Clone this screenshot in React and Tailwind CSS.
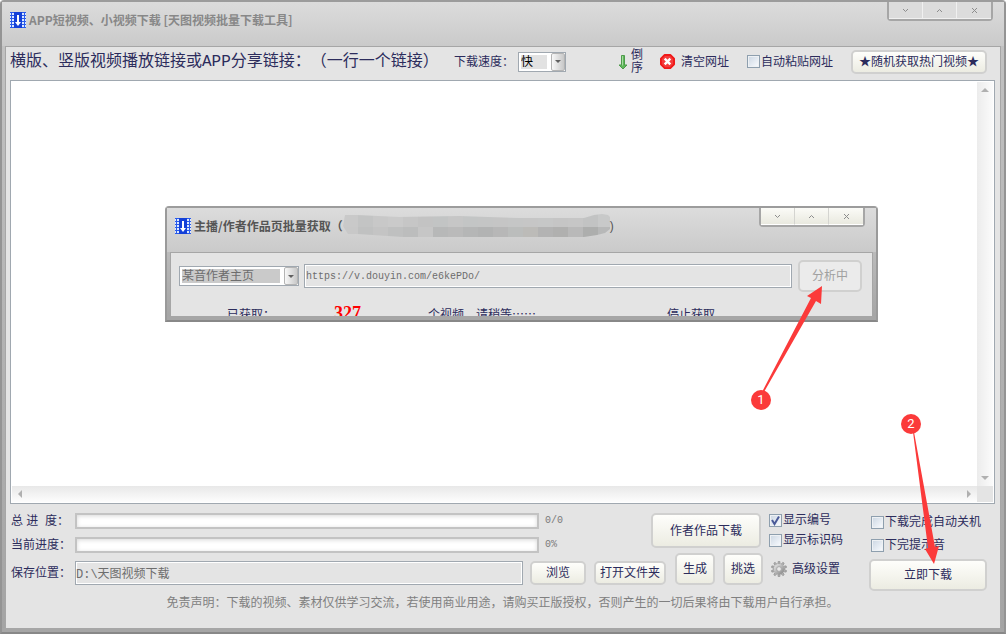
import React from 'react';
import clsx from 'clsx';

const SONG = "font-['Liberation_Sans','Noto_Sans_CJK_SC',sans-serif]";
const YAHEI = "font-['Noto_Sans_CJK_SC',sans-serif]";
const MONO = "font-['Liberation_Mono','Noto_Sans_CJK_SC',monospace]";

const AppIcon = () => (
  <svg width="16" height="16" viewBox="0 0 16 16" className="shrink-0">
    <rect width="16" height="16" fill="#2a5bea" />
    <rect x="4" width="8" height="16" fill="#1440d8" />
    {[1, 4, 7, 10, 13].map((y) => (
      <g key={y} fill="#dce8ff">
        <rect x="0" y={y} width="1" height="2" />
        <rect x="2" y={y} width="2" height="2" />
        <rect x="12" y={y} width="2" height="2" />
        <rect x="15" y={y} width="1" height="2" />
      </g>
    ))}
    <path d="M7 3h2v7h2l-3 4-3-4h2z" fill="#fff" />
  </svg>
);

const GearIcon = () => (
  <svg width="16" height="16" viewBox="0 0 16 16" className="shrink-0">
    <defs>
      <linearGradient id="gear" x1="0" y1="0" x2="1" y2="1">
        <stop offset="0" stopColor="#dedede" />
        <stop offset="1" stopColor="#8f8f8f" />
      </linearGradient>
    </defs>
    {[0, 36, 72, 108, 144, 180, 216, 252, 288, 324].map((angle) => (
      <path
        key={angle}
        d="M6.8 3.2 7.200 .3h1.600l.4 2.900z"
        transform={`rotate(${angle} 8 8)`}
        fill="#b0b0b0"
        stroke="#8c8c8c"
        strokeWidth=".6"
      />
    ))}
    <circle cx="8" cy="8" r="3.9" fill="none" stroke="url(#gear)" strokeWidth="2.800" />
    <circle cx="8" cy="8" r="2.4" fill="#e9e9e9" stroke="#8f8f8f" strokeWidth=".7" />
  </svg>
);

const ClearIcon = () => (
  <svg width="15" height="15" viewBox="0 0 16 16" className="shrink-0">
    <path d="M5 1h6l4 4v6l-4 4H5l-4-4V5z" fill="#f43c3c" stroke="#f01818" strokeWidth="2" strokeLinejoin="round" />
    <path d="M5 5l6 6M11 5l-6 6" stroke="#fff" strokeWidth="2.6" />
  </svg>
);

const SortIcon = () => (
  <svg width="10" height="16" viewBox="0 0 10 16" className="shrink-0">
    <path d="M3.500 1.500h3v9.500h2.500L5 15 1 11h2.500z" fill="#5fb75a" stroke="#4d9a4b" strokeWidth="1" strokeLinejoin="round" />
    <path d="M4.500 2v9.500" stroke="#a5dba0" strokeWidth="1" />
  </svg>
);

const Glyph = ({ d }) => (
  <svg width="7" height="7" viewBox="0 0 7 7" fill="none" stroke="#8d8d8d" strokeWidth="1">
    <path d={d} />
  </svg>
);

const controls = [
  { label: '最小化', d: 'M1 2l2.500 2.500L6 2' },
  { label: '最大化', d: 'M1 5l2.500-2.500L6 5' },
  { label: '关闭', d: 'M1 1l5 5M6 1L1 6' },
];

const WindowControls = ({ bright }) => (
  <div className="flex shrink-0 self-start rounded-b-sm border-2 border-t-0 border-[#a6a6a6]">
    {controls.map(({ label, d }) => (
      <button
        key={label}
        aria-label={label}
        className={clsx(
          'flex h-[17px] w-[34px] items-center justify-center border-r border-b last:border-r-0',
          bright
            ? 'border-r-[#d4d4d0] border-b-white bg-linear-to-b from-[#fbfbf7] to-[#e9e9df]'
            : 'border-[#f0f0f0] bg-[#dcdcdc]'
        )}
      >
        <Glyph d={d} />
      </button>
    ))}
  </div>
);

const Button = ({ className, children, ...props }) => (
  <button
    className={clsx(
      'shrink-0 rounded-[5px] border-2 border-[#d0d0cf] bg-linear-to-b from-[#fefefb] to-[#ecece2] whitespace-nowrap disabled:bg-none disabled:bg-[#ebebeb] disabled:text-[#a0a0a0]',
      className
    )}
    {...props}
  >
    {children}
  </button>
);

const Checkbox = ({ label, defaultChecked }) => (
  <label className="flex items-center gap-px whitespace-nowrap">
    <span className="relative flex size-[13px] shrink-0">
      <input
        type="checkbox"
        defaultChecked={defaultChecked}
        className="peer size-[13px] appearance-none border border-[#8e9fae] bg-linear-to-br from-[#cbd6e2] to-[#fafcff] shadow-[inset_0_0_0_1px_#eef1f4]"
      />
      <svg
        width="13"
        height="13"
        viewBox="0 0 13 13"
        className="pointer-events-none absolute inset-0 hidden peer-checked:block"
      >
        <path d="M3 6l2.500 4L10 2.500" fill="none" stroke="#4a5a98" strokeWidth="2" />
      </svg>
    </span>
    {label}
  </label>
);

const Select = ({ id, label, value, className, fieldClass }) => (
  <span className={clsx('flex h-5 shrink-0 items-stretch border border-[#a0a8b0] bg-white', className)}>
    <select
      id={id}
      aria-label={label}
      defaultValue={value}
      className={clsx('my-[2px] mr-1 ml-[2px] min-w-0 flex-1 appearance-none leading-[14px]', fieldClass)}
    >
      <option>{value}</option>
    </select>
    <span className="pointer-events-none flex w-[14px] items-center justify-center rounded-xs border border-[#b4b4b4] bg-linear-to-r from-[#f8f8f8] to-[#c8c8c8]">
      <svg width="6" height="3" viewBox="0 0 6 3">
        <path d="M0 0h6L3 3z" fill="#606060" />
      </svg>
    </span>
  </span>
);

const Progress = ({ label, value }) => (
  <div className="flex h-4 items-center">
    <span className="w-16 shrink-0 whitespace-pre">{label}</span>
    <div
      role="progressbar"
      aria-label={label}
      aria-valuenow={0}
      className="h-4 flex-1 border-2 border-[#c3c3c3] bg-white shadow-[inset_0_1px_4px_#d8d8d8]"
    />
    <span className={clsx('w-28 shrink-0 pl-[6px] text-[10px] text-[#7a7a7a]', MONO)}>{value}</span>
  </div>
);

const ScrollArrow = ({ d, label }) => (
  <button aria-label={label} className="flex size-4 shrink-0 items-center justify-center">
    <svg width="8" height="8" viewBox="0 0 8 8">
      <path d={d} fill="#b0b0b0" />
    </svg>
  </button>
);

const mosaicTop = ['#c9c9c9', '#c3c4c4', '#c8c8c8', '#cacaca', '#c6c6c6', '#c3c3c3', '#c2c4c4', '#c6c6c6', '#c3c5c5', '#c4c5c5', '#c5c5c5', '#c5c6c6', '#c6c6c6', '#c6c7c7', '#c5c5c5', '#c6c6c6', '#c2c3c3', '#c8c9c9'];
const mosaicBottom = ['#c8c8c8', '#c0c1c1', '#c4c4c4', '#bfc0c0', '#bcbdbd', '#c6c6c6', '#b7b8b8', '#bababa', '#b5b6b6', '#b2b3b3', '#b7b7b7', '#bbbdbc', '#bcbbb8', '#b3b3b3', '#b0b0af', '#b9b9b9', '#adaead', '#b7b8b8'];

const Mosaic = () => (
  <svg width="267" height="25" viewBox="0 0 267 25" className="shrink-0">
    <clipPath id="smudge">
      <path d="M2 1h12l42 2 60-1 60 2h65l10-3 8-1 6 1 2 2v12l-5 4-8 2-13 2H60L15 20H5L0 12z" />
    </clipPath>
    <g clipPath="url(#smudge)">
      {mosaicTop.map((fill, i) => (
        <rect key={i} x={i * 15} y="0" width="15" height="13" fill={fill} />
      ))}
      {mosaicBottom.map((fill, i) => (
        <rect key={i} x={i * 15} y="13" width="15" height="12" fill={fill} />
      ))}
    </g>
  </svg>
);

const AuthorDialog = () => (
  <section className="absolute top-[125px] left-[154px] flex w-[713px] flex-col rounded-t border-2 border-x-[#9a9a9a] border-t-[#9c9c9c] border-b-[#888] bg-linear-to-b from-[#cacaca] to-[#a4a4a4]">
    <header className="flex h-11 justify-between bg-linear-to-b from-[#dcdcdc] to-[#cacaca] pr-[11px] pl-2">
      <div className="flex h-9 items-center">
        <AppIcon />
        <h2 className={clsx('ml-[3px] text-xs font-bold whitespace-nowrap text-[#555]', YAHEI)}>
          主播/作者作品页批量获取（
        </h2>
        <Mosaic />
        <span className="text-[#555]">)</span>
      </div>
      <WindowControls bright />
    </header>
    <div className="mx-[3px] h-16 overflow-hidden border-x border-t border-[#a6a6a6] bg-[#e4e4e4] px-2 pt-[7px]">
      <div className="flex items-center">
        <Select label="主页类型" value="某音作者主页" className="w-[120px]" fieldClass="bg-[#cacaca] text-[#6d6d6d]" />
        <input
          aria-label="主页链接"
          readOnly
          defaultValue="https://v.douyin.com/e6kePDo/"
          className={clsx('ml-[5px] h-6 min-w-0 flex-1 border border-[#a0a8b0] bg-[#e4e4e4] px-px text-[10px] text-[#6d6d6d] shadow-[inset_0_0_0_1px_#fff]', MONO)}
        />
        <Button disabled className="mr-[2px] ml-[6px] h-8 w-16">
          分析中
        </Button>
      </div>
      <div className={clsx('mt-3 flex items-baseline pl-12 leading-[18px] whitespace-nowrap', YAHEI)}>
        <span className="w-[107px]">已获取：</span>
        <strong className="w-[94px] font-['Liberation_Serif',serif] text-lg leading-[18px] text-[#f00]">327</strong>
        <span className="w-[239px]">个视频，请稍等……</span>
        <span>停止获取</span>
      </div>
    </div>
    <div className="h-1 bg-[#a6a6a6]" />
  </section>
);

const Annotations = () => (
  <svg className="pointer-events-none absolute top-0 left-0 size-full" fill="#fb3a3a">
    <path d="M762 392 811 298 807 296 822 286 821 304 816 301 764 392z" />
    <circle cx="761" cy="400" r="10" />
    <path d="M913 432 928 548 925 549 934 564 939 546 935 547 914 432z" />
    <circle cx="911" cy="424" r="10" />
    <g fill="#fff" fontSize="13" textAnchor="middle" fontFamily="Roboto, sans-serif">
      <text x="761" y="404">1</text>
      <text x="911" y="428">2</text>
    </g>
  </svg>
);

const App = () => (
  <div className={clsx('relative flex min-h-screen flex-col text-xs text-[#2c2c5c] [text-spacing-trim:space-all]', SONG)}>
    <div className="flex flex-1 flex-col rounded-t border-2 border-x-[#949494] border-t-[#9c9c9c] border-b-[#888] bg-linear-to-b from-[#c4c4c4] to-[#a4a4a4]">
      <header className="flex h-11 shrink-0 justify-between bg-linear-to-b from-[#dcdcdc] to-[#cacaca] pr-[11px] pl-2">
        <div className="flex h-9 items-center gap-[3px]">
          <AppIcon />
          <h1 className={clsx('text-xs font-bold text-[#888]', YAHEI)}>
            APP短视频、小视频下载 [天图视频批量下载工具]
          </h1>
        </div>
        <WindowControls />
      </header>

      <main className="mx-[3px] flex flex-1 flex-col border border-b-0 border-[#a6a6a6] bg-[#e4e4e4] pr-[5px] pl-1">
        <div className="flex h-[33px] shrink-0 items-center pr-2 pb-1 whitespace-nowrap">
          <label htmlFor="links" className={clsx('w-[444px] text-base', MONO)}>
            横版、竖版视频播放链接或APP分享链接：（一行一个链接）
          </label>
          <label htmlFor="speed">下载速度：</label>
          <Select id="speed" value="快" className="ml-1 w-12" fieldClass="bg-[#e2e2e2] text-black" />
          <button className="ml-auto flex items-center gap-[3px]">
            <SortIcon />
            <span className="w-3 leading-[13px] whitespace-normal">倒序</span>
          </button>
          <button className="ml-[17px] flex items-center gap-[6px]">
            <ClearIcon />
            清空网址
          </button>
          <div className="ml-[18px]">
            <Checkbox label="自动粘贴网址" />
          </div>
          <Button className="ml-[18px] h-6 w-[136px]">★随机获取热门视频★</Button>
        </div>

        <div className="relative flex flex-1 flex-col border border-[#a0a8b0] bg-white p-px">
          <div className="flex flex-1">
            <textarea id="links" className="flex-1 resize-none outline-none" />
            <div className="flex w-4 flex-col justify-between bg-linear-to-r from-[#ececec] to-[#fbfbfb]">
              <ScrollArrow label="向上滚动" d="M0 6h8L4 2z" />
              <ScrollArrow label="向下滚动" d="M0 2h8L4 6z" />
            </div>
          </div>
          <div className="flex h-4">
            <div className="flex flex-1 justify-between bg-linear-to-b from-[#e8e8e8] to-[#fdfdfd]">
              <ScrollArrow label="向左滚动" d="M6 0v8L2 4z" />
              <ScrollArrow label="向右滚动" d="M2 0v8l4-4z" />
            </div>
            <div className="w-4 bg-[#e4e4e4]" />
          </div>
          <AuthorDialog />
        </div>

        <div className="flex shrink-0 gap-6 pt-2 pr-2 pl-px">
          <div className="min-w-0 flex-1">
            <div className="flex">
              <div className="flex flex-1 flex-col gap-2 pt-px">
                <Progress label="总 进  度：" value="0/0" />
                <Progress label="当前进度：" value="0%" />
              </div>
              <Button className="mt-px mr-2 h-[35px] w-[110px]">作者作品下载</Button>
              <div className="flex w-[76px] flex-col gap-1">
                <Checkbox label="显示编号" defaultChecked />
                <Checkbox label="显示标识码" />
              </div>
            </div>
            <div className="flex items-end">
              <label htmlFor="path" className="w-16 shrink-0 leading-6">
                保存位置：
              </label>
              <input
                id="path"
                readOnly
                defaultValue="D:\天图视频下载"
                className={clsx('h-6 min-w-0 flex-1 border border-[#a0a8b0] bg-[#e4e4e4] text-[#6d6d6d] shadow-[inset_0_0_0_1px_#fff]', MONO)}
              />
              <Button className="ml-[7px] h-6 w-14">浏览</Button>
              <Button className="ml-2 h-6 w-[72px]">打开文件夹</Button>
              <Button className="ml-[9px] h-8 w-10">生成</Button>
              <Button className="ml-2 h-8 w-10">挑选</Button>
              <button className="ml-2 flex h-8 w-[74px] items-center gap-[5px] whitespace-nowrap">
                <GearIcon />
                高级设置
              </button>
            </div>
          </div>
          <div className="flex w-[118px] flex-col pt-[2px]">
            <div className="flex flex-col gap-[7px] pl-[2px]">
              <Checkbox label="下载完成自动关机" />
              <Checkbox label="下完提示音" />
            </div>
            <Button className="mt-[6px] h-8">立即下载</Button>
          </div>
        </div>

        <p className="mt-1 mb-[17px] text-center text-[#808080]">
          免责声明：下载的视频、素材仅供学习交流，若使用商业用途，请购买正版授权，否则产生的一切后果将由下载用户自行承担。
        </p>
      </main>
      <div className="h-1 bg-[#a6a6a6]" />
    </div>
    <Annotations />
  </div>
);

export default App;
